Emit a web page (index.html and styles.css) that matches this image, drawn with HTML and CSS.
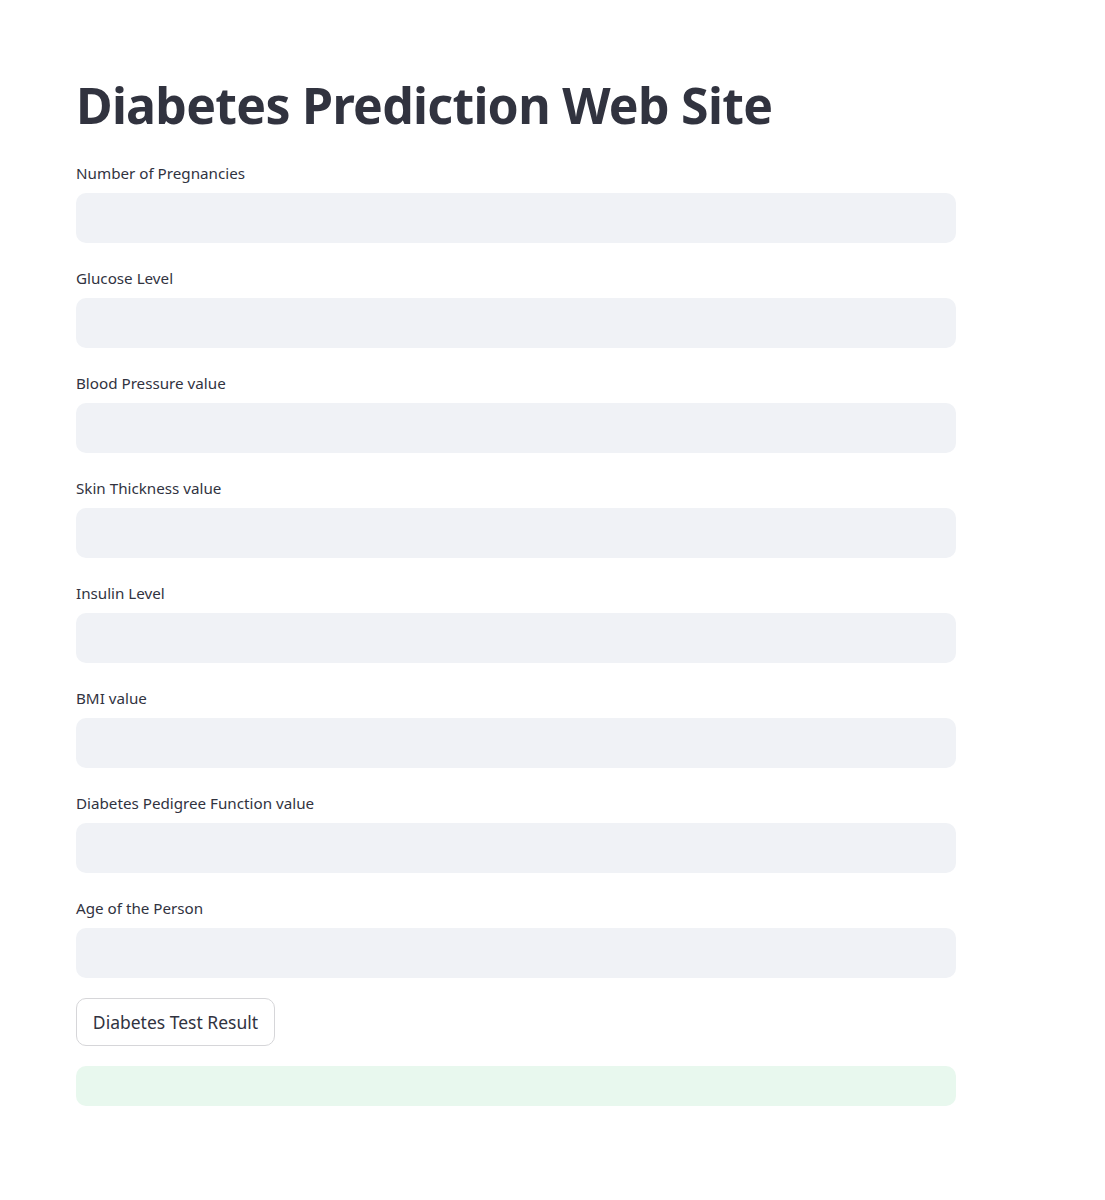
FILE: index.html
```html
<!DOCTYPE html>
<html>
<head>
<meta charset="utf-8">
<link rel="stylesheet" href="styles.css">
</head>
<body>
<main class="main">
  <h1 class="title">Diabetes Prediction Web Site</h1>
  <div class="fields">
    <div class="field"><label class="label">Number of Pregnancies</label><div class="input"></div></div>
    <div class="field"><label class="label">Glucose Level</label><div class="input"></div></div>
    <div class="field"><label class="label">Blood Pressure value</label><div class="input"></div></div>
    <div class="field"><label class="label">Skin Thickness value</label><div class="input"></div></div>
    <div class="field"><label class="label">Insulin Level</label><div class="input"></div></div>
    <div class="field"><label class="label">BMI value</label><div class="input"></div></div>
    <div class="field"><label class="label">Diabetes Pedigree Function value</label><div class="input"></div></div>
    <div class="field"><label class="label">Age of the Person</label><div class="input"></div></div>
  </div>
  <button class="button">Diabetes Test Result</button>
  <div class="success"></div>
</main>
</body>
</html>
```
FILE: styles.css
```css
html, body {
  margin: 0;
  padding: 0;
  background: #ffffff;
}
body {
  font-family: "Noto Sans", "Open Sans", sans-serif;
  color: #31333f;
}
.main {
  width: 880px;
  margin-left: 76px;
  padding-top: 74px;
  display: flex;
  flex-direction: column;
}
.title {
  margin: 0 0 27px 0;
  font-size: 50px;
  font-weight: 700;
  line-height: 62px;
  letter-spacing: -0.72px;
  color: #31333f;
}
.fields {
  display: flex;
  flex-direction: column;
  gap: 25px;
}
.field {
  display: flex;
  flex-direction: column;
}
.label {
  font-size: 15.2px;
  line-height: 20px;
  height: 20px;
  margin-bottom: 10px;
  color: #31333f;
}
.input {
  height: 50px;
  border-radius: 10px;
  background: #f0f2f6;
}
.button {
  align-self: flex-start;
  margin-top: 20px;
  height: 48px;
  width: 199px;
  padding: 0;
  border: 1px solid #d6d6d9;
  border-radius: 10px;
  background: #ffffff;
  font-family: "Noto Sans", "Open Sans", sans-serif;
  font-size: 17.5px;
  color: #31333f;
}
.success {
  margin-top: 20px;
  height: 40px;
  border-radius: 10px;
  background: #e8f8ee;
}
```
